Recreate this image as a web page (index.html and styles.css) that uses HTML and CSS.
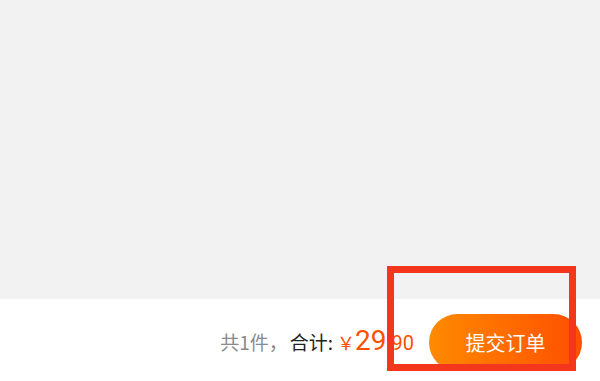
FILE: index.html
```html
<!DOCTYPE html>
<html lang="zh-CN">
<head>
  <meta charset="UTF-8">
  <title>提交订单</title>
  <link rel="stylesheet" href="styles.css">
</head>
<body>
  <div class="page">
    <div class="content"></div>
    <div class="footer">
      <span class="count">共1件，</span>
      <span class="label">合计:</span>
      <span class="price"><span class="yen">￥</span><span class="int">29</span><span class="dec">90</span></span>
      <button class="submit">提交订单</button>
    </div>
    <div class="mark"></div>
  </div>
</body>
</html>
```

FILE: styles.css
```css
html, body {
  margin: 0;
  padding: 0;
  height: 100%;
}
body {
  font-family: Roboto, "Noto Sans CJK SC", sans-serif;
  background: #f2f2f2;
}
.page {
  position: relative;
  display: flex;
  flex-direction: column;
  height: 381px;
}
.content {
  flex: 1;
  background: #f2f2f2;
}
.footer {
  height: 82px;
  background: #fff;
  display: flex;
  align-items: center;
  justify-content: flex-end;
  padding-right: 18px;
  box-sizing: border-box;
}
.count {
  font-family: "Noto Sans CJK SC", sans-serif;
  font-size: 19px;
  color: #8a8a8a;
  margin-top: 3px;
}
.label {
  font-family: "Noto Sans CJK SC", sans-serif;
  font-size: 19px;
  color: #222;
  margin-left: 2px;
  margin-top: 3px;
}
.price {
  color: #ff5000;
  margin-left: 4px;
  display: flex;
  align-items: baseline;
}
.yen {
  font-family: "Noto Sans CJK SC", sans-serif;
  font-size: 18px;
}
.int {
  font-size: 28px;
}
.dec {
  font-size: 20px;
  margin-left: 5px;
}
.submit {
  margin-left: 15px;
  width: 153px;
  height: 57px;
  border: none;
  border-radius: 29px;
  background: linear-gradient(to right, #ff8a00, #ff4f00);
  color: #fff;
  font-family: "Noto Sans CJK SC", sans-serif;
  font-size: 20px;
  margin-top: 4px;
}
.mark {
  position: absolute;
  left: 387px;
  top: 266px;
  width: 175px;
  height: 91px;
  border: 7px solid #f4361c;
}
```
